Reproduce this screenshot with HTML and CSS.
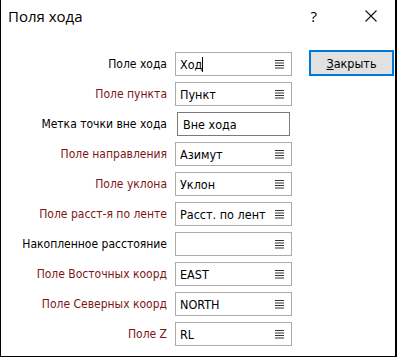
FILE: index.html
```html
<!DOCTYPE html>
<html lang="ru">
<head>
    <meta charset="UTF-8">
    <title>Поля хода</title>
    <link rel="stylesheet" href="styles.css">
</head>
<body>

    <div class="window">
        <header class="titlebar">
            <span class="title">Поля хода</span>
            <span class="help">?</span>
            <svg class="close" width="12" height="12" viewBox="0 0 12 12">
                <path d="M0.5 0.5 L11.5 11.5 M11.5 0.5 L0.5 11.5" stroke="#111" stroke-width="1.1" fill="none"/>
            </svg>
        </header>

        <div class="content">
            <div class="fields">
                <label>Поле хода</label>
                <div class="field"><span class="value">Ход<i class="caret"></i></span><svg class="menu"><use href="#lines"/></svg></div>

                <label class="req">Поле пункта</label>
                <div class="field"><span class="value">Пункт</span><svg class="menu"><use href="#lines"/></svg></div>

                <label>Метка точки вне хода</label>
                <div class="field plain"><span class="value">Вне хода</span></div>

                <label class="req">Поле направления</label>
                <div class="field"><span class="value">Азимут</span><svg class="menu"><use href="#lines"/></svg></div>

                <label class="req">Поле уклона</label>
                <div class="field"><span class="value">Уклон</span><svg class="menu"><use href="#lines"/></svg></div>

                <label class="req">Поле расст-я по ленте</label>
                <div class="field"><span class="value">Расст. по лент</span><svg class="menu"><use href="#lines"/></svg></div>

                <label>Накопленное расстояние</label>
                <div class="field"><span class="value"></span><svg class="menu"><use href="#lines"/></svg></div>

                <label class="req">Поле Восточных коорд</label>
                <div class="field"><span class="value">EAST</span><svg class="menu"><use href="#lines"/></svg></div>

                <label class="req">Поле Северных коорд</label>
                <div class="field"><span class="value">NORTH</span><svg class="menu"><use href="#lines"/></svg></div>

                <label class="req">Поле Z</label>
                <div class="field"><span class="value">RL</span><svg class="menu"><use href="#lines"/></svg></div>
            </div>

            <button class="btn"><u>З</u>акрыть</button>
        </div>
    </div>

    <!-- shared list icon -->
    <svg width="0" height="0" style="position:absolute">
        <symbol id="lines" viewBox="0 0 9 10">
            <path d="M0 1.5 H9 M0 4 H9 M0 6.5 H9 M0 9 H9" stroke="#333" stroke-width="1"/>
        </symbol>
    </svg>

</body>
</html>
```

FILE: styles.css
```css
body {
    margin: 0;
    padding: 0;
    background-color: #fff;
    font-family: "DejaVu Sans Condensed", "DejaVu Sans", sans-serif;
    font-stretch: condensed;
    color: #000;
}

.window {
    width: 394px;
    height: 356px;
    border-left: 1px solid #000;
    border-right: 2px solid #000;
    border-bottom: 1px solid #000;
    background-color: #fff;
}

.titlebar {
    height: 32px;
    display: flex;
    align-items: center;
}

.title {
    font-family: "Open Sans", sans-serif;
    font-stretch: normal;
    font-size: 15px;
    margin-left: 7px;
    flex: 1;
}

.help {
    font-family: "Open Sans", sans-serif;
    font-stretch: normal;
    font-size: 15px;
    margin-right: 48px;
}

.close {
    margin-right: 18px;
}

.content {
    display: flex;
    align-items: flex-start;
    padding-top: 20px;
}

.fields {
    display: grid;
    grid-template-columns: 166px 117px;
    grid-auto-rows: 24px;
    column-gap: 8px;
    row-gap: 6px;
}

.fields label {
    font-size: 12px;
    text-align: right;
    align-self: center;
    white-space: nowrap;
}

.fields label.req {
    color: #7d1515;
}

.field {
    display: flex;
    align-items: center;
    box-sizing: border-box;
    border: 1px solid #ababab;
    padding: 0 7px 0 4px;
    font-size: 12.5px;
}

.field.plain {
    margin: 0 2px;
    border-color: #7a7a7a;
    padding-left: 5px;
}

.value {
    flex: 1;
    white-space: nowrap;
    overflow: hidden;
}

.caret {
    display: inline-block;
    width: 1px;
    height: 15px;
    background-color: #000;
    vertical-align: -3px;
}

.menu {
    width: 9px;
    height: 10px;
}

.btn {
    margin-left: 17px;
    margin-top: -2px;
    width: 85px;
    height: 26px;
    background-color: #e1e1e1;
    border: 2px solid #0078d7;
    font-family: "DejaVu Sans Condensed", "DejaVu Sans", sans-serif;
    font-stretch: condensed;
    font-size: 12.5px;
    padding: 0;
}
```
